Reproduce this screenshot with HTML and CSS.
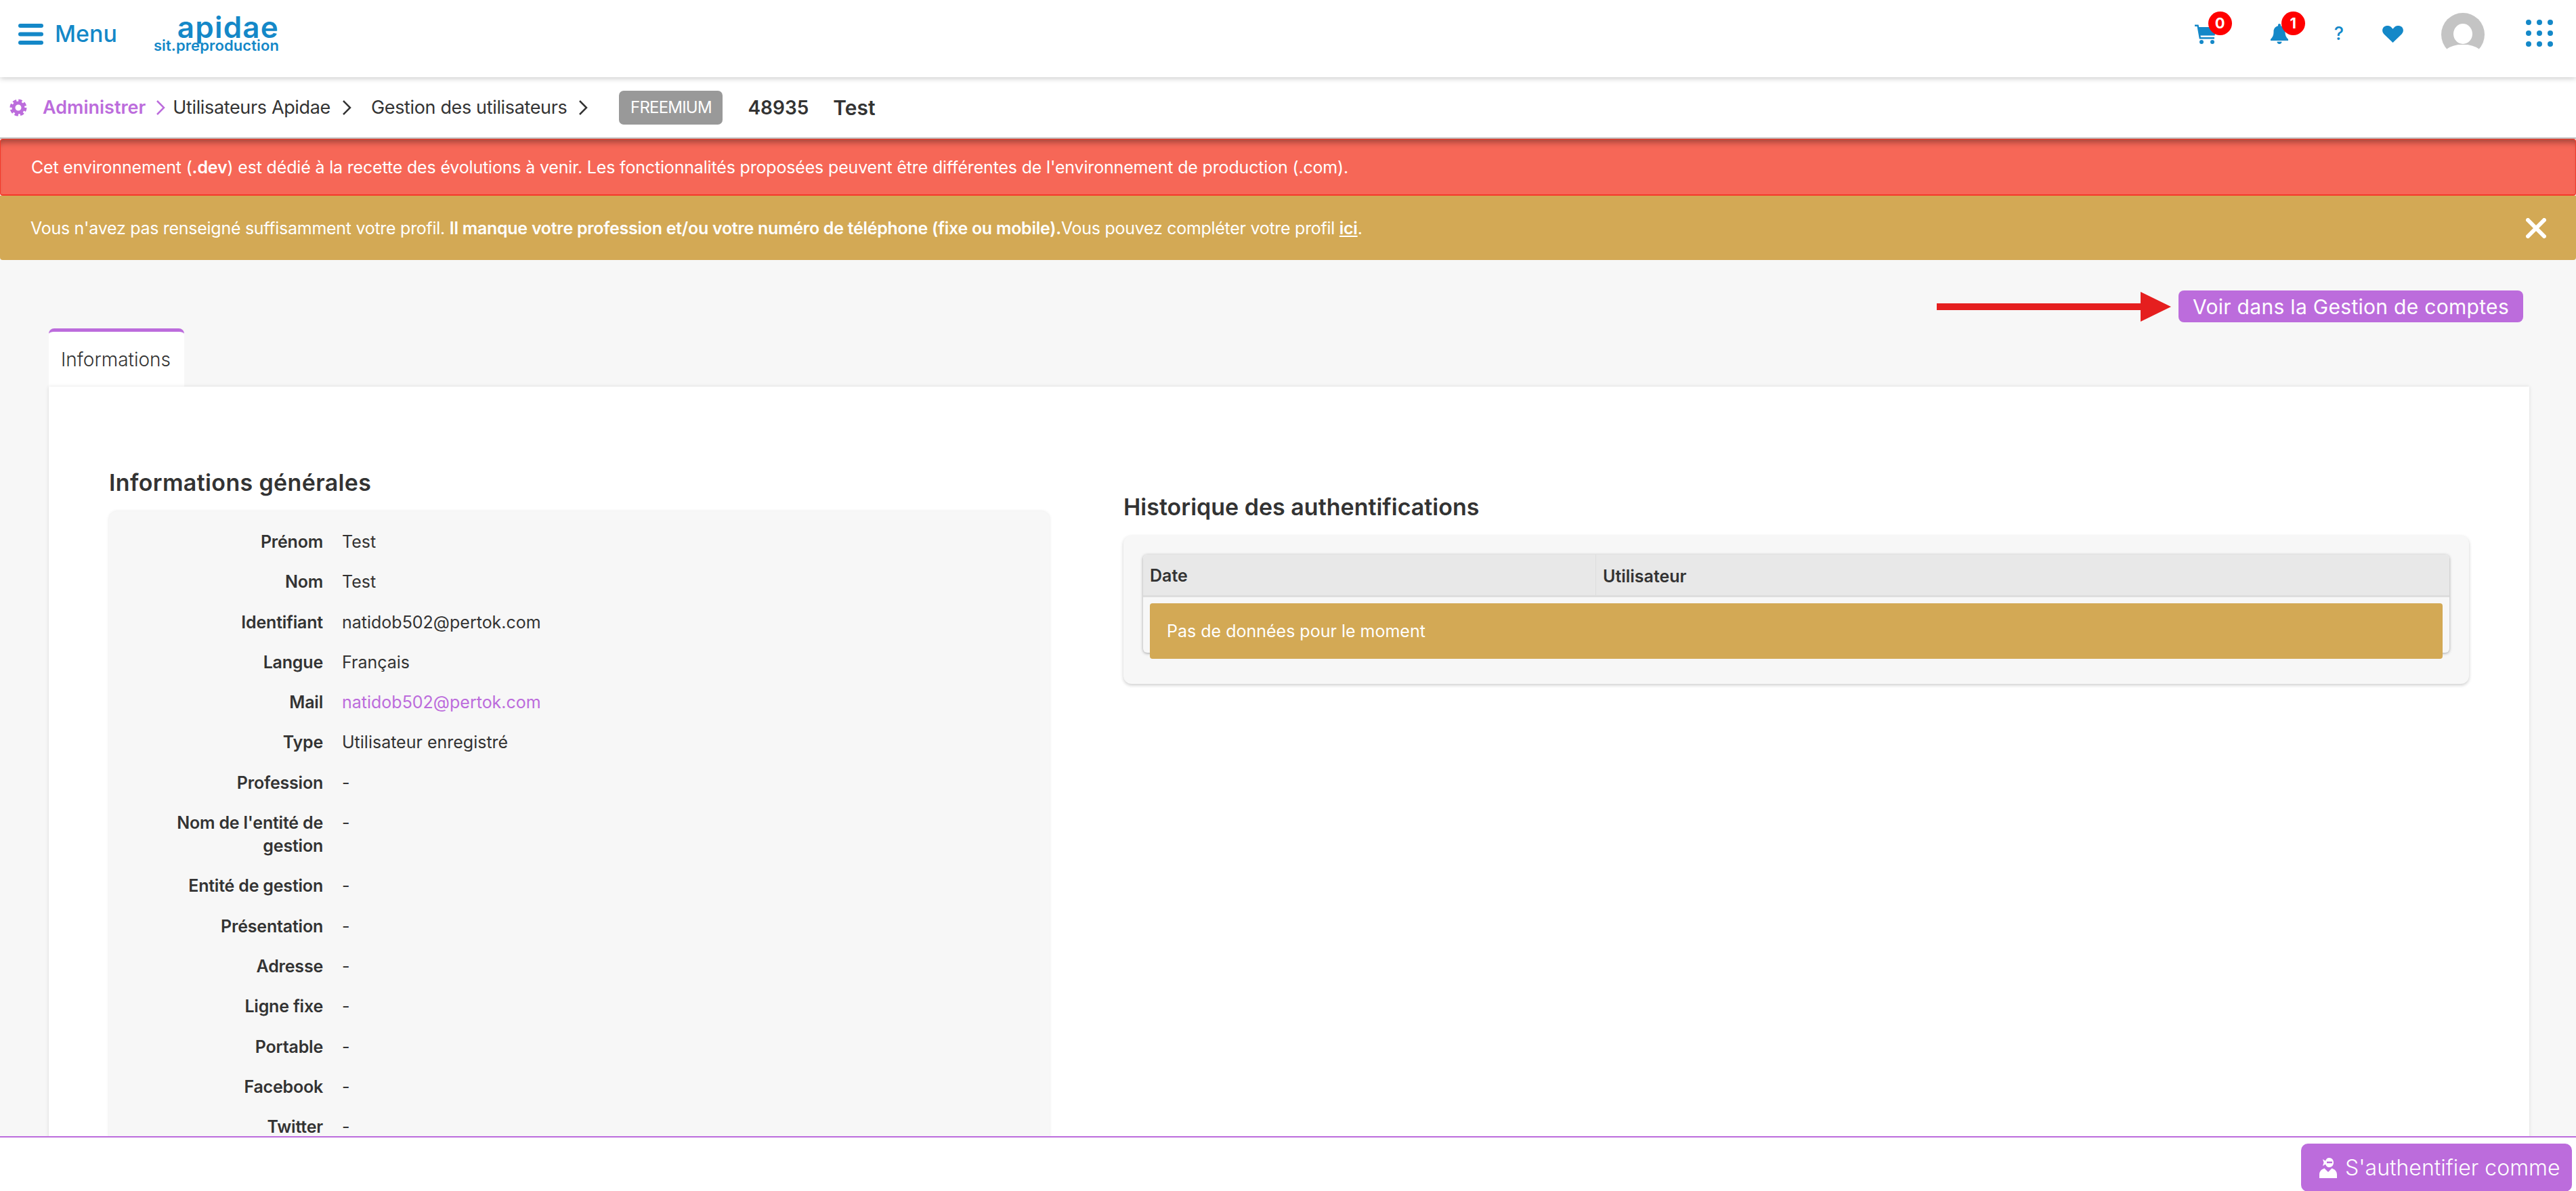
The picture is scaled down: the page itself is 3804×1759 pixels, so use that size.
FILE: index.html
```html
<!DOCTYPE html>
<html lang="fr">

<head>
    <meta charset="UTF-8">
    <title>Gestion des utilisateurs</title>
    <link rel="stylesheet" href="styles.css">
</head>

<body>
    <div class="app">
        <header class="topbar">
            <div class="topbar-left">
                <svg class="burger" viewBox="0 0 37 31"><rect width="37" height="6" rx="3" /><rect y="12.500" width="37" height="6" rx="3" /><rect y="25" width="37" height="6" rx="3" /></svg>
                <span class="menu-label">Menu</span>
                <div class="logo">
                    <span class="logo-name">apidae</span>
                    <span class="logo-sub">sit.preproduction</span>
                </div>
            </div>
            <div class="topbar-right">
                <div class="top-icon icon-cart">
                    <svg viewBox="0 0 32 30"><path d="M0 1.500h5.500l.8 3.500H32l-2.500 12.500H8.500l.4 2.500H29v2.500H6.800L3.500 4H0z" /><circle cx="10" cy="27" r="3" /><circle cx="26" cy="27" r="3" /></svg>
                    <span class="badge">0</span>
                </div>
                <div class="top-icon icon-bell">
                    <svg viewBox="0 0 26 30"><path d="M13 0c1.200 0 2 .9 2 2v1.200c4.200.9 6.500 4.400 6.500 8.300 0 7 2.300 9 4.500 11.500V25H0v-2c2.200-2.500 4.500-4.500 4.500-11.500 0-3.900 2.300-7.400 6.500-8.300V2c0-1.100.8-2 2-2zM9.500 26.500h7c0 2-1.500 3.500-3.500 3.500s-3.500-1.500-3.500-3.500z" /></svg>
                    <span class="badge">1</span>
                </div>
                <span class="top-help">?</span>
                <svg class="top-heart" viewBox="0 0 31 25"><path d="M15.500 25L2.500 12.500C-1 9-0.500 3.500 3 1.200 6.500-1 11-.2 13.500 2.500l2 2.300 2-2.300C20-.2 24.500-1 28 1.200c3.500 2.300 4 7.800.5 11.300z" /></svg>
                <svg class="avatar" viewBox="0 0 64 64"><circle cx="32" cy="32" r="32" fill="#c4c4c4" /><ellipse cx="32" cy="31" rx="14" ry="15" fill="#fff" /><path d="M6 64V56c4-6 14-8 19-9h14c5 1 15 3 19 9v8z" fill="#fff" /></svg>
                <svg class="apps" viewBox="0 0 40 40"><circle cx="4" cy="4" r="4" /><circle cx="20" cy="4" r="4" /><circle cx="36" cy="4" r="4" /><circle cx="4" cy="20" r="4" /><circle cx="20" cy="20" r="4" /><circle cx="36" cy="20" r="4" /><circle cx="4" cy="36" r="4" /><circle cx="20" cy="36" r="4" /><circle cx="36" cy="36" r="4" /></svg>
            </div>
        </header>

        <nav class="breadcrumb">
            <svg class="crumb-gear" viewBox="0 0 26 26"><circle cx="13" cy="13" r="10" fill="none" stroke="#bc6cdc" stroke-width="5" stroke-dasharray="5 2.850" /><circle cx="13" cy="13" r="7" fill="none" stroke="#bc6cdc" stroke-width="5" /></svg>
            <a class="crumb-root">Administrer</a>
            <svg class="chevron chevron-root" viewBox="0 0 14 24"><path d="M2 2l10 10L2 22" /></svg>
            <span class="crumb crumb-users">Utilisateurs Apidae</span>
            <svg class="chevron chevron-users" viewBox="0 0 14 24"><path d="M2 2l10 10L2 22" /></svg>
            <span class="crumb crumb-manage">Gestion des utilisateurs</span>
            <svg class="chevron chevron-manage" viewBox="0 0 14 24"><path d="M2 2l10 10L2 22" /></svg>
            <span class="plan-tag">FREEMIUM</span>
            <span class="crumb-id">48935</span>
            <span class="crumb-name">Test</span>
        </nav>

        <div class="alert alert-red">Cet environnement (<b>.dev</b>) est dédié à la recette des évolutions à venir. Les fonctionnalités proposées peuvent être différentes de l'environnement de production (.com).</div>
        <div class="alert alert-gold">
            <span>Vous n'avez pas renseigné suffisamment votre profil. <b>Il manque votre profession et/ou votre numéro de téléphone (fixe ou mobile).</b>Vous pouvez compléter votre profil <b class="alert-link">ici</b>.</span>
            <svg class="alert-close" viewBox="0 0 30 30"><path d="M3 3l24 24M27 3L3 27" /></svg>
        </div>

        <main class="content">
            <div class="actions">
                <svg class="red-arrow" viewBox="0 0 346 44"><path d="M0 17h301V0l45 22-45 22V27H0z" /></svg>
                <a class="btn-accounts">Voir dans la Gestion de comptes</a>
            </div>

            <div class="tab">Informations</div>

            <section class="panel">
                <div class="col-general">
                    <h2 class="title-general">Informations générales</h2>
                    <div class="info-card">
                        <div class="info-row"><span class="info-key">Prénom</span><span>Test</span></div>
                        <div class="info-row"><span class="info-key">Nom</span><span>Test</span></div>
                        <div class="info-row"><span class="info-key">Identifiant</span><span>natidob502@pertok.com</span></div>
                        <div class="info-row"><span class="info-key">Langue</span><span>Français</span></div>
                        <div class="info-row"><span class="info-key">Mail</span><span class="info-mail">natidob502@pertok.com</span></div>
                        <div class="info-row"><span class="info-key">Type</span><span>Utilisateur enregistré</span></div>
                        <div class="info-row"><span class="info-key">Profession</span><span>-</span></div>
                        <div class="info-row"><span class="info-key">Nom de l'entité de gestion</span><span>-</span></div>
                        <div class="info-row"><span class="info-key">Entité de gestion</span><span>-</span></div>
                        <div class="info-row"><span class="info-key">Présentation</span><span>-</span></div>
                        <div class="info-row"><span class="info-key">Adresse</span><span>-</span></div>
                        <div class="info-row"><span class="info-key">Ligne fixe</span><span>-</span></div>
                        <div class="info-row"><span class="info-key">Portable</span><span>-</span></div>
                        <div class="info-row"><span class="info-key">Facebook</span><span>-</span></div>
                        <div class="info-row"><span class="info-key">Twitter</span><span>-</span></div>
                    </div>
                </div>

                <div class="col-history">
                    <h2>Historique des authentifications</h2>
                    <div class="history-card">
                        <div class="history-table">
                            <div class="history-head">
                                <span class="head-date">Date</span>
                                <span class="head-user">Utilisateur</span>
                            </div>
                            <div class="history-empty">Pas de données pour le moment</div>
                        </div>
                    </div>
                </div>
            </section>
        </main>

        <footer class="bottombar">
            <a class="btn-auth">
                <svg class="auth-icon" viewBox="0 0 26 30"><path d="M5 2l4 2.500C10 2 11.500 0 14.500 0 18.500 0 21 3.200 21 7s-2.500 7-6.500 7c-3 0-4.500-2-5.500-4.500L5 12l1.500-5zM11 5.500v2.500h8V5.500z" fill-rule="evenodd" /><path d="M0 30v-5c0-5 3-8 7.500-9.500L13 21l5.500-5.500C23 17 26 20 26 25v5z" /></svg>
                <span>S'authentifier comme</span>
            </a>
        </footer>
    </div>
</body>

</html>
```

FILE: styles.css
```css
* {
    box-sizing: border-box;
}

html,
body {
    margin: 0;
    padding: 0;
    height: 100%;
    overflow: hidden;
}

body {
    font-family: 'Inter', 'Liberation Sans', sans-serif;
    font-size: 26px;
    color: #333;
    background-color: #f7f7f7;
}

.app {
    height: 100vh;
    overflow: hidden;
}

/* Top bar */
.topbar {
    position: relative;
    z-index: 3;
    display: flex;
    justify-content: space-between;
    height: 114px;
    background-color: #fff;
    box-shadow: 0 2px 8px rgba(0, 0, 0, 0.2);
}

.topbar-left {
    display: flex;
    align-items: flex-start;
    padding-left: 27px;
}

.burger {
    width: 37px;
    height: 31px;
    margin-top: 35px;
    fill: #1488c8;
}

.menu-label {
    margin: 27px 0 0 17px;
    font-size: 34px;
    line-height: 46px;
    font-weight: 500;
    color: #1488c8;
}

.logo {
    display: flex;
    flex-direction: column;
    align-items: flex-end;
    margin: 22px 0 0 54px;
    color: #1488c8;
}

.logo-name {
    font-size: 44px;
    line-height: 36px;
    font-weight: 600;
    letter-spacing: 1.200px;
}

.logo-sub {
    font-size: 22px;
    line-height: 18px;
    font-weight: 600;
    letter-spacing: 0.100px;
}

.topbar-right {
    display: flex;
    align-items: flex-start;
    padding-right: 34px;
}

.top-icon {
    position: relative;
    margin-top: 35px;
}

.top-icon svg {
    display: block;
    height: 30px;
    fill: #1488c8;
}

.icon-cart svg {
    width: 32px;
}

.icon-bell {
    margin-left: 80px;
}

.icon-bell svg {
    width: 26px;
}

.badge {
    position: absolute;
    top: -18px;
    left: 20px;
    width: 35px;
    height: 35px;
    border-radius: 50%;
    background-color: #f00;
    color: #fff;
    font-size: 22px;
    font-weight: 700;
    line-height: 35px;
    text-align: center;
}

.icon-bell .badge {
    left: 16px;
}

.top-help {
    margin: 34px 0 0 68px;
    font-size: 27px;
    line-height: 32px;
    font-weight: 500;
    color: #1488c8;
}

.top-heart {
    width: 31px;
    height: 25px;
    margin: 38px 0 0 57px;
    fill: #1488c8;
}

.avatar {
    width: 64px;
    height: 64px;
    margin: 19px 0 0 56px;
}

.apps {
    width: 40px;
    height: 40px;
    margin: 29px 0 0 61px;
    fill: #1488c8;
}

/* Breadcrumb */
.breadcrumb {
    position: relative;
    z-index: 2;
    display: flex;
    align-items: center;
    height: 91px;
    padding-left: 14px;
    background-color: #fff;
    border-bottom: 2px solid #bbb;
    font-size: 27px;
}

.crumb-gear {
    width: 26px;
    height: 26px;
}

.crumb-root {
    margin-left: 23px;
    font-weight: 600;
    color: #bc6cdc;
}

.crumb {
    letter-spacing: -0.350px;
}

.chevron {
    width: 14px;
    height: 24px;
    fill: none;
    stroke: #333;
    stroke-width: 2.500;
}

.chevron-root {
    margin-left: 15px;
    stroke: #bc6cdc;
}

.crumb-users {
    margin-left: 11px;
}

.chevron-users {
    margin-left: 17px;
}

.crumb-manage {
    margin-left: 29px;
}

.chevron-manage {
    margin-left: 17px;
}

.plan-tag {
    display: flex;
    align-items: center;
    justify-content: center;
    width: 153px;
    height: 50px;
    margin-left: 46px;
    border-radius: 7px;
    background-color: #999;
    color: #fff;
    font-size: 24px;
    letter-spacing: -0.800px;
}

.crumb-id {
    margin-left: 37px;
    font-size: 28px;
    font-weight: 600;
}

.crumb-name {
    margin-left: 36px;
    font-size: 30px;
    font-weight: 600;
}

/* Alerts */
.alert {
    display: flex;
    align-items: center;
    padding-left: 45px;
    color: #fff;
    font-size: 25px;
    font-weight: 400;
    letter-spacing: -0.280px;
}

.alert b {
    font-weight: 600;
}

.alert-red {
    height: 84px;
    background-color: #f66757;
    border: 1px solid #f4382a;
    border-bottom-width: 2px;
    border-radius: 4px;
    box-shadow: inset 0 10px 10px -6px rgba(0, 0, 0, 0.35);
    letter-spacing: -0.170px;
}

.alert-gold {
    justify-content: space-between;
    height: 95px;
    padding-right: 44px;
    background-color: #d3a955;
    border-radius: 0 0 4px 4px;
}

.alert-link {
    text-decoration: underline;
}

.alert-close {
    width: 30px;
    height: 30px;
    fill: none;
    stroke: #fff;
    stroke-width: 6;
    stroke-linecap: round;
}

/* Main content */
.content {
    padding: 45px 69px 0 72px;
}

.actions {
    display: flex;
    align-items: center;
    justify-content: flex-end;
    height: 47px;
    padding-right: 9px;
}

.red-arrow {
    width: 346px;
    height: 44px;
    margin-right: 11px;
    fill: #e51f1f;
}

.btn-accounts {
    display: flex;
    align-items: center;
    justify-content: center;
    width: 509px;
    height: 47px;
    border-radius: 8px;
    background-color: #bc6cdc;
    color: #fff;
    font-size: 30px;
    letter-spacing: 0.300px;
}

.tab {
    display: flex;
    align-items: center;
    width: 200px;
    height: 86px;
    margin-top: 9px;
    padding-left: 18px;
    border-top: 5px solid #bc6cdc;
    border-radius: 8px 8px 0 0;
    background-color: #fff;
    font-size: 28px;
    font-weight: 300;
}

.panel {
    display: grid;
    grid-template-columns: 1389px 1987px;
    gap: 109px;
    padding: 117px 89px 0;
    background-color: #fff;
    box-shadow: 0 0 5px rgba(0, 0, 0, 0.12);
}

h2 {
    margin: 0 0 17px;
    font-size: 34px;
    line-height: 50px;
    font-weight: 600;
}

.title-general {
    letter-spacing: 0.350px;
}

.col-history {
    padding-top: 36px;
}

.info-card {
    padding: 28px 0 0 56px;
    background-color: #f7f7f7;
    border-radius: 12px;
    box-shadow: 0 0 4px rgba(0, 0, 0, 0.1);
}

.info-row {
    display: flex;
    gap: 28px;
    padding-bottom: 25.300px;
    line-height: 34px;
    font-size: 25px;
}

.info-key {
    flex: none;
    width: 260px;
    text-align: right;
    font-weight: 600;
    letter-spacing: -0.200px;
}

.info-mail {
    color: #bc6cdc;
}

.history-card {
    padding: 28px 29px;
    background-color: #f7f7f7;
    border-radius: 12px;
    box-shadow: 0 2px 5px rgba(0, 0, 0, 0.2);
}

.history-table {
    border-radius: 6px;
    background-color: #f7f7f7;
    box-shadow: 0 1px 4px rgba(0, 0, 0, 0.35);
}

.history-head {
    display: flex;
    align-items: center;
    height: 63px;
    background-color: #e8e8e8;
    border-bottom: 3px solid #ddd;
    border-radius: 6px 6px 0 0;
    font-size: 25px;
    font-weight: 600;
}

.head-date {
    width: 669px;
    height: 100%;
    padding-left: 10px;
    line-height: 63px;
    border-right: 1px solid #ddd;
}

.head-user {
    padding-top: 3px;
    padding-left: 10px;
}

.history-empty {
    display: flex;
    align-items: center;
    height: 82px;
    margin: 0 10px;
    padding-left: 25px;
    position: relative;
    top: 9px;
    margin-bottom: 18px;
    border-radius: 4px;
    background-color: #d3a955;
    color: #fff;
    font-size: 25px;
}

/* Bottom bar */
.bottombar {
    position: fixed;
    left: 0;
    right: 0;
    bottom: 0;
    z-index: 4;
    display: flex;
    justify-content: flex-end;
    height: 81px;
    padding: 9px 6px 0 0;
    background-color: #fff;
    border-top: 2px solid #bc6cdc;
}

.btn-auth {
    display: flex;
    align-items: center;
    width: 400px;
    height: 71px;
    padding-left: 27px;
    border-radius: 10px;
    background-color: #bc6cdc;
    color: #fff;
    font-size: 32px;
    font-weight: 300;
}

.auth-icon {
    width: 26px;
    height: 30px;
    margin-right: 12px;
    fill: #fff;
}
```
